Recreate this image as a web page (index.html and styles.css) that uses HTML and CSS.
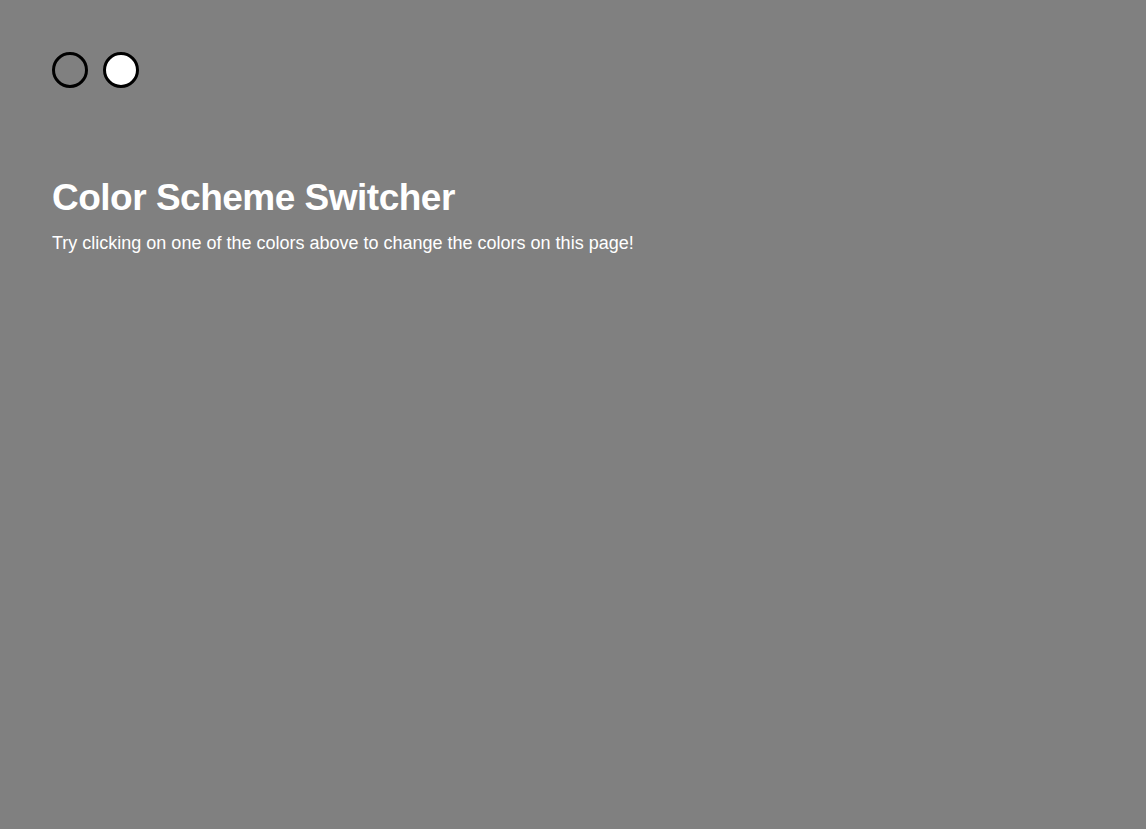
FILE: index.html
```html
<!DOCTYPE html>
<html>
<head>
<meta charset="utf-8">
<link rel="stylesheet" href="styles.css">
</head>
<body>
<div class="page">
  <div class="swatches">
    <button class="swatch swatch-gray" aria-label="Gray"></button>
    <button class="swatch swatch-white" aria-label="White"></button>
  </div>
  <div class="intro">
    <h1 class="title">Color Scheme Switcher</h1>
    <p class="lead">Try clicking on one of the colors above to change the colors on this page!</p>
  </div>
</div>
</body>
</html>
```

FILE: styles.css
```css
html, body {
  margin: 0;
  padding: 0;
  height: 100%;
}
body {
  background: #808080;
  color: #ffffff;
  font-family: "Liberation Sans", Arial, Helvetica, sans-serif;
}
.page {
  padding: 52px 52px;
}
.swatches {
  display: flex;
  gap: 15px;
}
.swatch {
  width: 36px;
  height: 36px;
  border-radius: 50%;
  border: 3px solid #000;
  padding: 0;
  margin: 0;
  box-sizing: border-box;
}
.swatch-gray { background: #808080; }
.swatch-white { background: #ffffff; }
.intro {
  margin-top: 88px;
}
.title {
  margin: 0;
  font-size: 37px;
  font-weight: 700;
  line-height: 43px;
  letter-spacing: -0.5px;
}
.lead {
  margin: 13px 0 0;
  font-size: 18px;
  line-height: 22px;
}
```
